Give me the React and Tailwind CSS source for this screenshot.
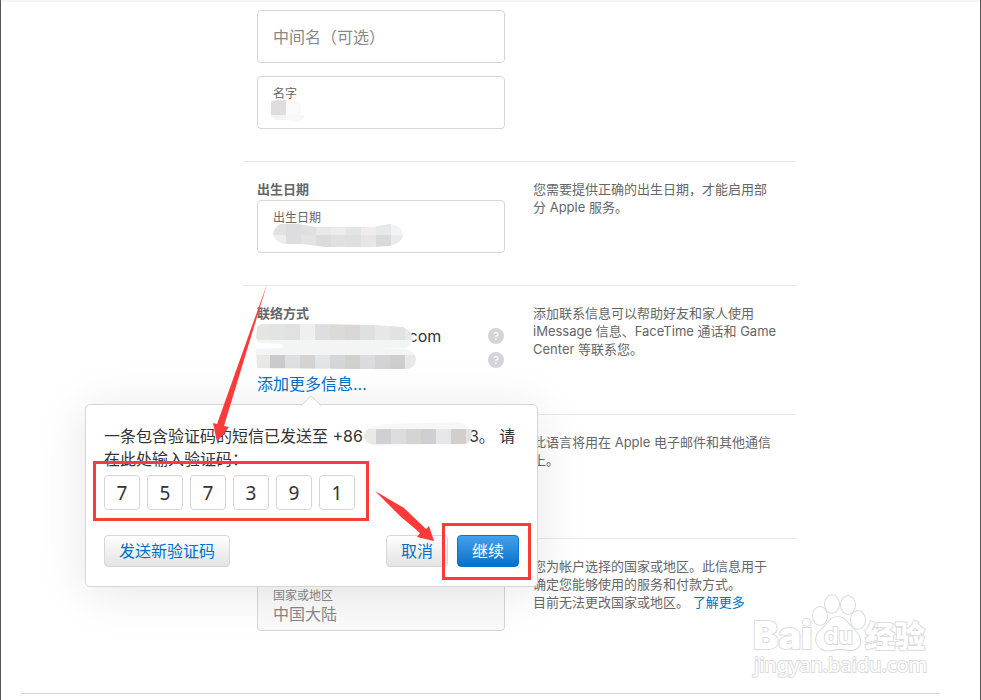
const FONT = "font-['Inter','Noto_Sans_CJK_SC',sans-serif]";

function Field({ id, label, children }) {
  return (
    <div className="relative h-[53px] rounded-[4px] border border-[#d6d6d6] bg-white px-[15px] pt-[9px]">
      <label htmlFor={id} className="block text-xs leading-4 text-[#666]">{label}</label>
      <input id={id} className="block h-5 w-full bg-transparent text-base text-[#333] outline-none" />
      {children}
    </div>
  );
}

function Blocks({ items, className, viewBox, clip, id }) {
  return (
    <svg className={className} viewBox={viewBox} aria-hidden="true">
      <defs>
        <clipPath id={id}>
          <path d={clip} />
        </clipPath>
      </defs>
      <g clipPath={`url(#${id})`} shapeRendering="crispEdges">
        {items.map(([x, y, w, h, fill]) => (
          <rect key={`${x}-${y}`} x={x} y={y} width={w} height={h} fill={fill} />
        ))}
      </g>
    </svg>
  );
}

function Section({ title, note, children, className = "" }) {
  return (
    <section className={`flex border-t border-[#e8e8e8] px-[14px] pt-[18px] ${className}`}>
      <div className="w-[248px] shrink-0">
        <h2 className="mb-[2px] h-[18px] text-[13px] leading-[18px] font-bold text-[#666]">{title}</h2>
        {children}
      </div>
      <p className="ml-7 w-[244px] text-[13px] leading-[18px] text-[#666]">{note}</p>
    </section>
  );
}

function Help() {
  return (
    <button aria-label="?" className="mr-px flex size-4 items-center justify-center rounded-full bg-[#d4d4d9] text-[11px] leading-4 text-white">
      ?
    </button>
  );
}

const EMAIL_ROW = ["#e5e5e4", "#e2e3e3", "#e1e1e1", "#efefee", "#dedee0", "#dbdad9", "#d8d7d6", "#dfe0e0", "#e8e6e6", "#e1e2e3", "#e8eaea"];
const PHONE_ROW = ["#e9e8e5", "#cacacc", "#dedfe2", "#d4d3cf", "#e3e4e7", "#d5d6da", "#d0d0ce", "#dcdcdf", "#d3d3d5", "#cfcdce", "#e8e8ea"];
const DATE_TOP = ["#e1e1e1", "#dddddf", "#dfdfdf", "#e8e8e8", "#ececec", "#e3e4e4", "#eeecec", "#e7e8ea", "#f2f4f4"];
const DATE_LOW = ["#ededed", "#dcdde1", "#e3e3e1", "#dbdbdb", "#e0e0e0", "#dee0e0", "#e8e5e4", "#dadadb", "#eaebec"];
const NUMBER_ROW = ["#e9eae7", "#d0d0d3", "#dcdcde", "#d5d4d3", "#cfcfd1", "#e5e7e9", "#d3cecc", "#dfe3e3"];

const grey = "h-8 rounded-[4px] border border-[#d6d6d6] bg-linear-to-b from-white to-[#e3e3e3] px-[14px] text-base leading-[30px] text-[#0070c9]";

function CodePopover() {
  const digits = ["7", "5", "7", "3", "9", "1"];
  return (
    <div role="dialog" className="absolute top-8 -left-[172px] z-10 h-[183px] w-[453px] rounded-[5px] border border-[#d6d6d6] bg-white px-[18px] pt-5 shadow-[0_5px_50px_rgba(0,0,0,0.1)]">
      <svg className="absolute -top-[10px] left-[214px] h-[11px] w-[22px]" viewBox="0 0 22 11" aria-hidden="true">
        <path d="M1 11 11 1 21 11Z" fill="#fff" />
        <path d="M1 10.5 11 .8 21 10.5" fill="none" stroke="#d6d6d6" />
      </svg>
      <p className="text-base leading-[23px] text-[#333]">
        一条包含验证码的短信已发送至 +86
        <span className="inline-block w-[106px]" />
        3。 请<br />在此处输入验证码：
      </p>
      <Blocks
        id="number-clip"
        className="absolute top-[17px] left-[277px] h-[25px] w-[110px]"
        viewBox="0 0 110 25"
        clip="M8 5 22 2 60 1 95 0Q109 3 109 12 108 23 98 23L70 22 14 24Q0 21 1 13 2 8 8 5Z"
        items={[
          [0, 0, 110, 7, "#f7f7f7"],
          ...NUMBER_ROW.map((c, i) => [i === 0 ? 0 : i * 15 - 2, 7, 15, 15, c]),
          [0, 22, 110, 3, "#f5f5f5"],
        ]}
      />
      <div className="mt-1 flex gap-[7px]">
        {digits.map((d, i) => (
          <input
            key={i}
            aria-label={`${i + 1}`}
            defaultValue={d}
            className="h-[35px] w-9 rounded-[4px] border border-[#d6d6d6] text-center font-['Noto_Sans',sans-serif] text-[19px] text-[#333] outline-none"
          />
        ))}
      </div>
      <div className="mt-[25px] flex justify-between">
        <button className={grey}>发送新验证码</button>
        <div className="flex gap-[9px]">
          <button className={grey}>取消</button>
          <button className="h-8 rounded-[4px] border border-[#0077cc] bg-linear-to-b from-[#42a1ec] to-[#0070c9] px-[14px] text-base leading-[30px] text-white">继续</button>
        </div>
      </div>
      <Marks />
    </div>
  );
}

function Marks() {
  return (
    <svg className="pointer-events-none absolute -top-[125px] left-[7px] h-[305px] w-[440px]" viewBox="93 280 440 305" aria-hidden="true">
      <g fill="none" stroke="#fb3a3a" strokeWidth="3" shapeRendering="crispEdges">
        <rect x="94.5" y="462.5" width="273" height="57" />
        <rect x="443.5" y="524.5" width="86" height="54" />
      </g>
      <g fill="#fb3a3a">
        <path d="M267 284 224 426 229 427 217 442 213 423 217 424Z" />
        <path d="M375 491 404 508 426 529 429 526 434 541 417 537 420 533 400 516Z" />
      </g>
    </svg>
  );
}

function Watermark() {
  return (
    <svg className="absolute top-[592px] left-[748px] h-[90px] w-[184px]" viewBox="748 592 184 90" aria-hidden="true">
      <g fill="#fff" stroke="#dcdcdc" strokeWidth="2" paintOrder="stroke">
        <text x="752" y="649" fontSize="38" fontWeight="900" className="font-['Inter',sans-serif]">Bai</text>
        <ellipse cx="819" cy="616" rx="7" ry="9" />
        <ellipse cx="831" cy="604" rx="7" ry="9" />
        <ellipse cx="847" cy="605" rx="7" ry="9" />
        <ellipse cx="857" cy="620" rx="7" ry="9" />
        <path d="M837 617C844 617 847 624 852 629 863 638 861 651 848 650 842 649 838 648 832 650 818 653 810 641 819 631 826 625 829 617 837 617Z" />
        <text x="823" y="644" fontSize="23" fontWeight="700" className="font-['Inter',sans-serif]">du</text>
        <text x="864" y="647" fontSize="30" fontWeight="900" className="font-['Noto_Sans_CJK_SC',sans-serif]">经验</text>
        <text x="753" y="672" fontSize="20" fontWeight="400" className="font-['Noto_Sans',sans-serif]">jingyan.baidu.com</text>
      </g>
    </svg>
  );
}

export default function App() {
  return (
    <div className={`relative overflow-hidden border-x border-[#555] bg-white pb-[6px] ${FONT}`}>
      <div className="h-[2px] bg-[#f5f5f5]" />
      <main className="mr-10 ml-5 border-b border-[#d6d6d6] pt-2 pr-36 pb-[62px] pl-[222px]">
        <div className="flex flex-col gap-[13px] px-[14px] pb-8">
          <input
            aria-label="中间名（可选）"
            placeholder="中间名（可选）"
            className="h-[53px] w-[248px] rounded-[4px] border border-[#d6d6d6] px-[15px] text-base outline-none placeholder:text-[#888]"
          />
          <div className="w-[248px]">
            <Field id="given" label="名字">
              <Blocks
                id="given-clip"
                className="absolute top-[23px] left-[10px] h-[22px] w-[40px]"
                viewBox="0 0 40 22"
                clip="M3 2Q6 0 9 0L28 0 33 4 33 15 37 15Q35 21 28 22L18 20 8 20 3 16Z"
                items={[[0, 0, 18, 15, "#dfdddf"], [18, 0, 22, 15, "#fafafa"], [0, 15, 18, 7, "#f3f3f3"], [18, 15, 22, 7, "#f8f8f8"]]}
              />
            </Field>
          </div>
        </div>

        <Section title="出生日期" className="pb-8" note="您需要提供正确的出生日期，才能启用部分 Apple 服务。">
          <Field id="birth" label="出生日期">
            <Blocks
              id="birth-clip"
              className="absolute top-[23px] left-[14px] h-[24px] w-[133px]"
              viewBox="0 0 133 24"
              clip="M8 0 26 0 44 3 100 3 118 0Q131 2 131 11 130 19 118 22L98 23 53 23 30 20 12 20Q1 17 1 10 2 4 8 0Z"
              items={[
                ...DATE_TOP.map((c, i) => [i ? i * 15 - 1 : 0, 0, 15, 11, c]),
                ...DATE_LOW.map((c, i) => [i ? i * 15 - 1 : 0, 11, 15, 13, c]),
              ]}
            />
          </Field>
        </Section>

        <Section
          title="联络方式"
          className="pb-[18px]"
          note="添加联系信息可以帮助好友和家人使用 iMessage 信息、FaceTime 通话和 Game Center 等联系您。"
        >
          <div className="relative">
            <div className="flex h-6 items-center justify-between pl-[147px] text-base leading-6 text-[#333]">
              .com <Help />
            </div>
            <div className="flex h-6 items-center justify-end">
              <Help />
            </div>
            <Blocks
              id="contact-clip"
              className="absolute top-0 -left-[2px] h-[46px] w-[164px]"
              viewBox="0 0 164 46"
              clip="M6 0 60 0 119 1 148 3 156 8 158 16Q156 23 148 24L128 25 150 25Q161 27 161 36 160 45 150 45L100 45 2 44 1 25 28 24 27 20 4 19 1 14 2 3Z"
              items={[
                ...EMAIL_ROW.map((c, i) => [i * 15, 0, 15, 16, c]),
                [0, 16, 164, 15, "#f3f4f4"],
                ...PHONE_ROW.map((c, i) => [i * 15, 31, 15, 15, c]),
              ]}
            />
            <div className="relative h-6">
              <a href="#more" className="text-base leading-6 text-[#0070c9]">添加更多信息...</a>
              <CodePopover />
            </div>
          </div>
        </Section>

        <Section title="" className="pb-8" note="此语言将用在 Apple 电子邮件和其他通信上。">
          <div className="h-[53px]" />
        </Section>

        <Section
          title=""
          note={
            <>
              您为帐户选择的国家或地区。此信息用于确定您能够使用的服务和付款方式。
              <br />
              目前无法更改国家或地区。 <a href="#learn" className="text-[#0070c9]">了解更多</a>
            </>
          }
        >
          <div className="h-[54px] rounded-[4px] border border-[#d6d6d6] bg-[#fafafa] px-[15px] pt-[10px]">
            <label htmlFor="country" className="block text-xs leading-4 text-[#888]">国家或地区</label>
            <select id="country" disabled className="block h-5 w-full appearance-none bg-transparent text-base leading-5 text-[#888] opacity-100">
              <option>中国大陆</option>
            </select>
          </div>
        </Section>
      </main>
      <Watermark />
    </div>
  );
}
